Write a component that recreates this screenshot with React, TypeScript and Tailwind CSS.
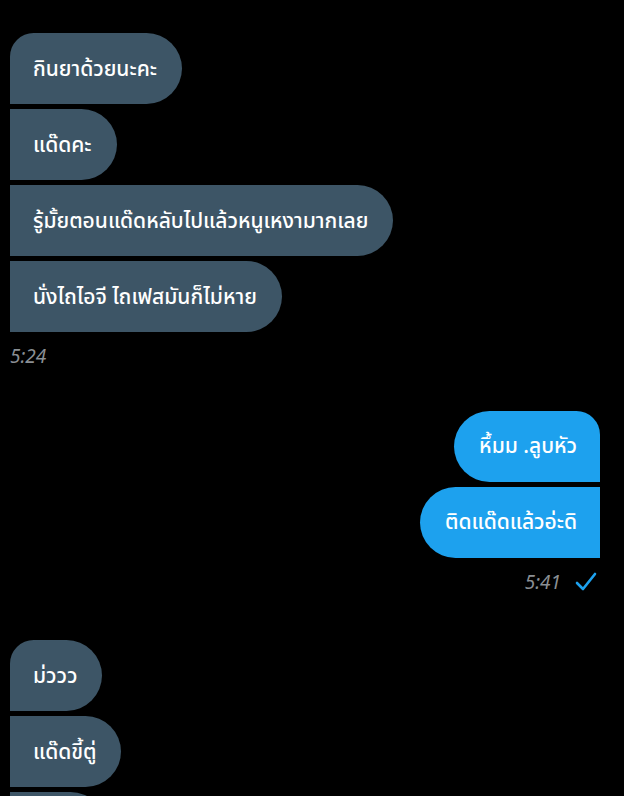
import React from "react";

const incomingTop = ["กินยาด้วยนะคะ", "แด๊ดคะ", "รู้มั้ยตอนแด๊ดหลับไปแล้วหนูเหงามากเลย", "นั่งไถไอจี ไถเฟสมันก็ไม่หาย"];
const outgoing = ["หึ้มม .ลูบหัว", "ติดแด๊ดแล้วอ่ะดิ"];
const incomingBottom = ["ม่ววว", "แด๊ดขี้ตู่"];

const font = { fontFamily: '"Noto Sans", "Noto Sans Thai", "Noto Sans CJK SC", sans-serif' };

const Incoming = ({ items, more }: { items: string[]; more?: boolean }) => (
  <div className="flex flex-col items-start gap-[5px]">
    {items.map((text, i) => (
      <div
        key={text}
        className={`flex h-[71px] items-center bg-[#3d5566] pl-[23px] pr-[25px] text-[21px] font-medium text-white rounded-r-[36px] ${
          i === 0 ? "rounded-tl-[24px]" : ""
        }`}
      >
        {text}
      </div>
    ))}
    {more && <div className="h-[71px] w-[96px] shrink-0 rounded-r-[36px] bg-[#3d5566]" />}
  </div>
);

const Outgoing = ({ items }: { items: string[] }) => (
  <div className="flex flex-col items-end gap-[5px]">
    {items.map((text, i) => (
      <div
        key={text}
        className={`flex h-[71px] items-center bg-[#1da1ee] pl-[25px] pr-[23px] text-[21px] font-medium text-white rounded-l-[36px] ${
          i === 0 ? "rounded-tr-[24px]" : ""
        }`}
      >
        {text}
      </div>
    ))}
  </div>
);

export default function App() {
  return (
    <div className="h-[796px] w-[624px] overflow-hidden bg-black pl-[10px] pr-[24px] pt-[33px]" style={font}>
      <Incoming items={incomingTop} />
      <div className="mt-[10px] text-[19px] italic text-[#8a8f94]">5:24</div>

      <div className="mt-[40px]">
        <Outgoing items={outgoing} />
      </div>
      <div className="mt-[10px] flex items-center justify-end gap-[14px] pr-[3px]">
        <span className="text-[19px] italic text-[#8a8f94]">5:41</span>
        <svg width="22" height="20" viewBox="0 0 22 20" fill="none">
          <path d="M2 11 L8 17 L20 2" stroke="#1da1ee" strokeWidth="2.6" strokeLinecap="round" strokeLinejoin="round" />
        </svg>
      </div>

      <div className="mt-[44px]">
        <Incoming items={incomingBottom} more />
      </div>
    </div>
  );
}
